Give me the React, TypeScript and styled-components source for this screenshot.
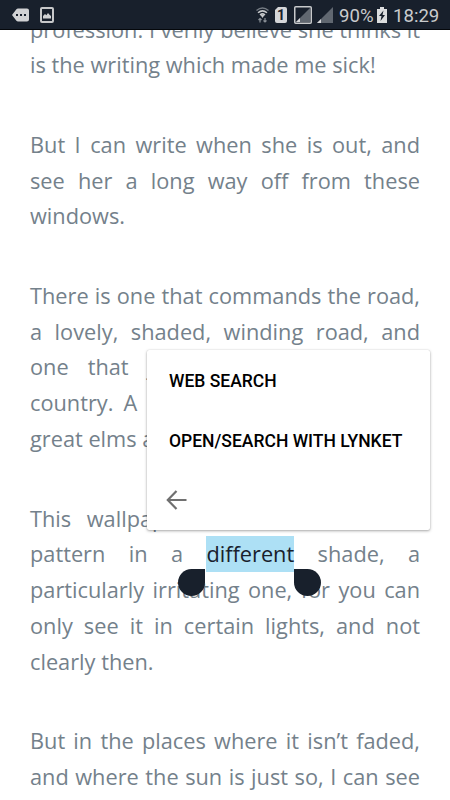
import React from "react";
import styled, { createGlobalStyle } from "styled-components";

const GlobalStyle = createGlobalStyle`
  * { box-sizing: border-box; }
  body { margin: 0; background: #fff; }
`;

const Screen = styled.div`
  width: 450px;
  height: 800px;
  display: flex;
  flex-direction: column;
  overflow: hidden;
  background: #fff;
`;

const StatusBar = styled.header`
  flex: 0 0 30px;
  display: flex;
  align-items: center;
  justify-content: space-between;
  padding: 0 10px 0 12px;
  background: #18202c;
  border-bottom: 1px solid #05080c;
  color: #c9cbcd;
  font: 400 18.6px/28px Roboto, sans-serif;
`;

const StatusGroup = styled.div`
  display: flex;
  align-items: center;
  height: 29px;
  padding-top: 1px;
`;

const Glyph = styled.svg<{ $gap?: number }>`
  display: block;
  flex: none;
  margin-right: ${(p) => p.$gap ?? 0}px;
`;

const StatusText = styled.span<{ $width: number; $gap?: number }>`
  flex: none;
  width: ${(p) => p.$width}px;
  margin-right: ${(p) => p.$gap ?? 0}px;
  padding-top: 1px;
  white-space: nowrap;
`;

const SimBadge = styled.span`
  flex: none;
  width: 12px;
  height: 16px;
  margin-right: 7px;
  border-radius: 2px;
  background: #d5d6d8;
  color: #18202c;
  font: 700 14px/16px Roboto, sans-serif;
  text-align: center;
  clip-path: polygon(3px 0, 100% 0, 100% 100%, 0 100%, 0 3px);
`;

const Reader = styled.main`
  flex: 1;
  min-height: 0;
  overflow: hidden;
  padding: 0 30px;
`;

const Story = styled.article`
  margin-top: -18.5px;
  font: 400 21.75px/35.8px "Open Sans", sans-serif;
  color: #74818b;
`;

const Paragraph = styled.p`
  margin: 0 0 43.7px;
`;

const Line = styled.span<{ $last?: boolean }>`
  display: block;
  white-space: nowrap;
  text-align: left;
  text-align-last: ${(p) => (p.$last ? "left" : "justify")};
`;

const Selection = styled.mark`
  position: relative;
  display: inline-block;
  height: 36px;
  background: #ade0f5;
  color: #18202c;
`;

const Handle = styled.span<{ $side: "start" | "end" }>`
  position: absolute;
  top: 33px;
  ${(p) => (p.$side === "start" ? "right: calc(100% + 1px);" : "left: 100%;")}
  width: 27px;
  height: 27px;
  background: #18202c;
  border-radius: ${(p) => (p.$side === "start" ? "50% 0 50% 50%" : "0 50% 50% 50%")};
`;

const ActionMenu = styled.div`
  position: absolute;
  left: 147px;
  top: 350px;
  width: 283px;
  height: 180px;
  display: flex;
  flex-direction: column;
  background: #fff;
  border-radius: 2px;
  box-shadow: 0 1px 3px rgba(0, 0, 0, 0.34), 0 0 1px rgba(0, 0, 0, 0.2);
`;

const MenuItem = styled.button`
  height: 60px;
  padding: 1px 0 0 22px;
  border: 0;
  background: none;
  color: #000;
  text-align: left;
  white-space: nowrap;
  font: 500 17.5px/58px Roboto, sans-serif;
`;

const BackButton = styled.button`
  height: 60px;
  padding: 0 0 0 19px;
  border: 0;
  background: none;
  display: flex;
  align-items: center;
`;

const story: string[][] = [
  ["profession. I verily believe she thinks it", "is the writing which made me sick!"],
  ["But I can write when she is out, and", "see her a long way off from these", "windows."],
  [
    "There is one that commands the road,",
    "a lovely, shaded, winding road, and",
    "one that just looks off over the",
    "country. A lovely country, too, full of",
    "great elms and velvet meadows.",
  ],
  [
    "This wallpaper has a kind of sub-",
    "pattern in a [different] shade, a",
    "particularly irritating one, for you can",
    "only see it in certain lights, and not",
    "clearly then.",
  ],
  ["But in the places where it isn’t faded,", "and where the sun is just so, I can see"],
];

function LineText({ text }: { text: string }) {
  const [before, selected, after] = text.split(/[[\]]/);
  if (!selected) return <>{text}</>;
  return (
    <>
      {before}
      <Selection>
        {selected}
        <Handle $side="start" />
        <Handle $side="end" />
      </Selection>
      {after}
    </>
  );
}

function Notifications() {
  return (
    <StatusGroup>
      <Glyph width="17" height="14" viewBox="0 0 17 14" $gap={11}>
        <path d="M6 .5h9a2 2 0 0 1 2 2v9a2 2 0 0 1-2 2H6a2 2 0 0 1-1.600-.8L0 7l4.400-5.700A2 2 0 0 1 6 .5Z" fill="#d1d2d4" />
        <path d="M4 6h2v2H4zm4 0h2v2H8zm4 0h2v2h-2z" fill="#18202c" />
      </Glyph>
      <Glyph width="14" height="16" viewBox="0 0 14 16">
        <rect x="1" y="1" width="12" height="14" rx="1" fill="none" stroke="#c7c8ca" strokeWidth="2" />
        <path d="M3 11.500V9l2-2 1.400 1.300L8 6l1.500 1.700L11 9v2.500Z" fill="#d1d2d4" />
      </Glyph>
    </StatusGroup>
  );
}

function DeviceStatus() {
  return (
    <StatusGroup>
      <Glyph width="13" height="16" viewBox="0 0 13 16" $gap={6}>
        <g fill="none" strokeWidth="1.500">
          <path d="M.5 3.500Q6.500-1.500 12.500 3.500" stroke="#747b83" />
          <path d="M2 5.800Q6.500 2 11 5.800M4 8Q6.500 5.800 9 8" stroke="#c7c9cb" />
        </g>
        <path d="m4.500 8 2 3 2-3Z" fill="#c7c9cb" />
        <path d="M4 15.500v-4M2.500 13 4 11.500 5.500 13M9 11v4M7.500 13.500 9 15l1.500-1.500" fill="none" stroke="#8a9097" strokeWidth="1.200" />
      </Glyph>
      <SimBadge>1</SimBadge>
      <Glyph width="18" height="18" viewBox="0 0 18 18" $gap={5}>
        <rect x=".75" y=".75" width="16.500" height="16.500" rx="1" fill="none" stroke="#c7c9cb" strokeWidth="1.500" />
        <path d="M16 2v14H2Z" fill="#606770" />
        <path d="m6 12-4 4h4Z" fill="#d5d6d8" />
      </Glyph>
      <Glyph width="16" height="16" viewBox="0 0 16 16" $gap={6}>
        <path d="M16 0v16H0Z" fill="#606770" />
        <path d="m4 12-4 4h4Z" fill="#d5d6d8" />
      </Glyph>
      <StatusText $width={35} $gap={3}>90%</StatusText>
      <Glyph width="10" height="16" viewBox="0 0 10 16" $gap={6}>
        <path d="M3 0h4v2h3v14H0V2h3Z" fill="#dcddde" />
        <path d="M6.500 3.500 2 9h2.500L3.500 14 8 8H5.500Z" fill="#18202c" />
      </Glyph>
      <StatusText $width={47}>18:29</StatusText>
    </StatusGroup>
  );
}

export default function App() {
  return (
    <Screen>
      <GlobalStyle />
      <StatusBar>
        <Notifications />
        <DeviceStatus />
      </StatusBar>
      <Reader>
        <Story>
          {story.map((lines, i) => (
            <Paragraph key={i}>
              {lines.map((text, j) => (
                <Line key={text} $last={j === lines.length - 1 && i !== story.length - 1}>
                  <LineText text={text} />
                </Line>
              ))}
            </Paragraph>
          ))}
        </Story>
      </Reader>
      <ActionMenu>
        <MenuItem>WEB SEARCH</MenuItem>
        <MenuItem>OPEN/SEARCH WITH LYNKET</MenuItem>
        <BackButton aria-label="Back">
          <Glyph width="21" height="20" viewBox="0 0 21 20">
            <path d="M20.500 10H2M10.500 1 1.800 10l8.700 9" fill="none" stroke="#707070" strokeWidth="2.200" />
          </Glyph>
        </BackButton>
      </ActionMenu>
    </Screen>
  );
}
